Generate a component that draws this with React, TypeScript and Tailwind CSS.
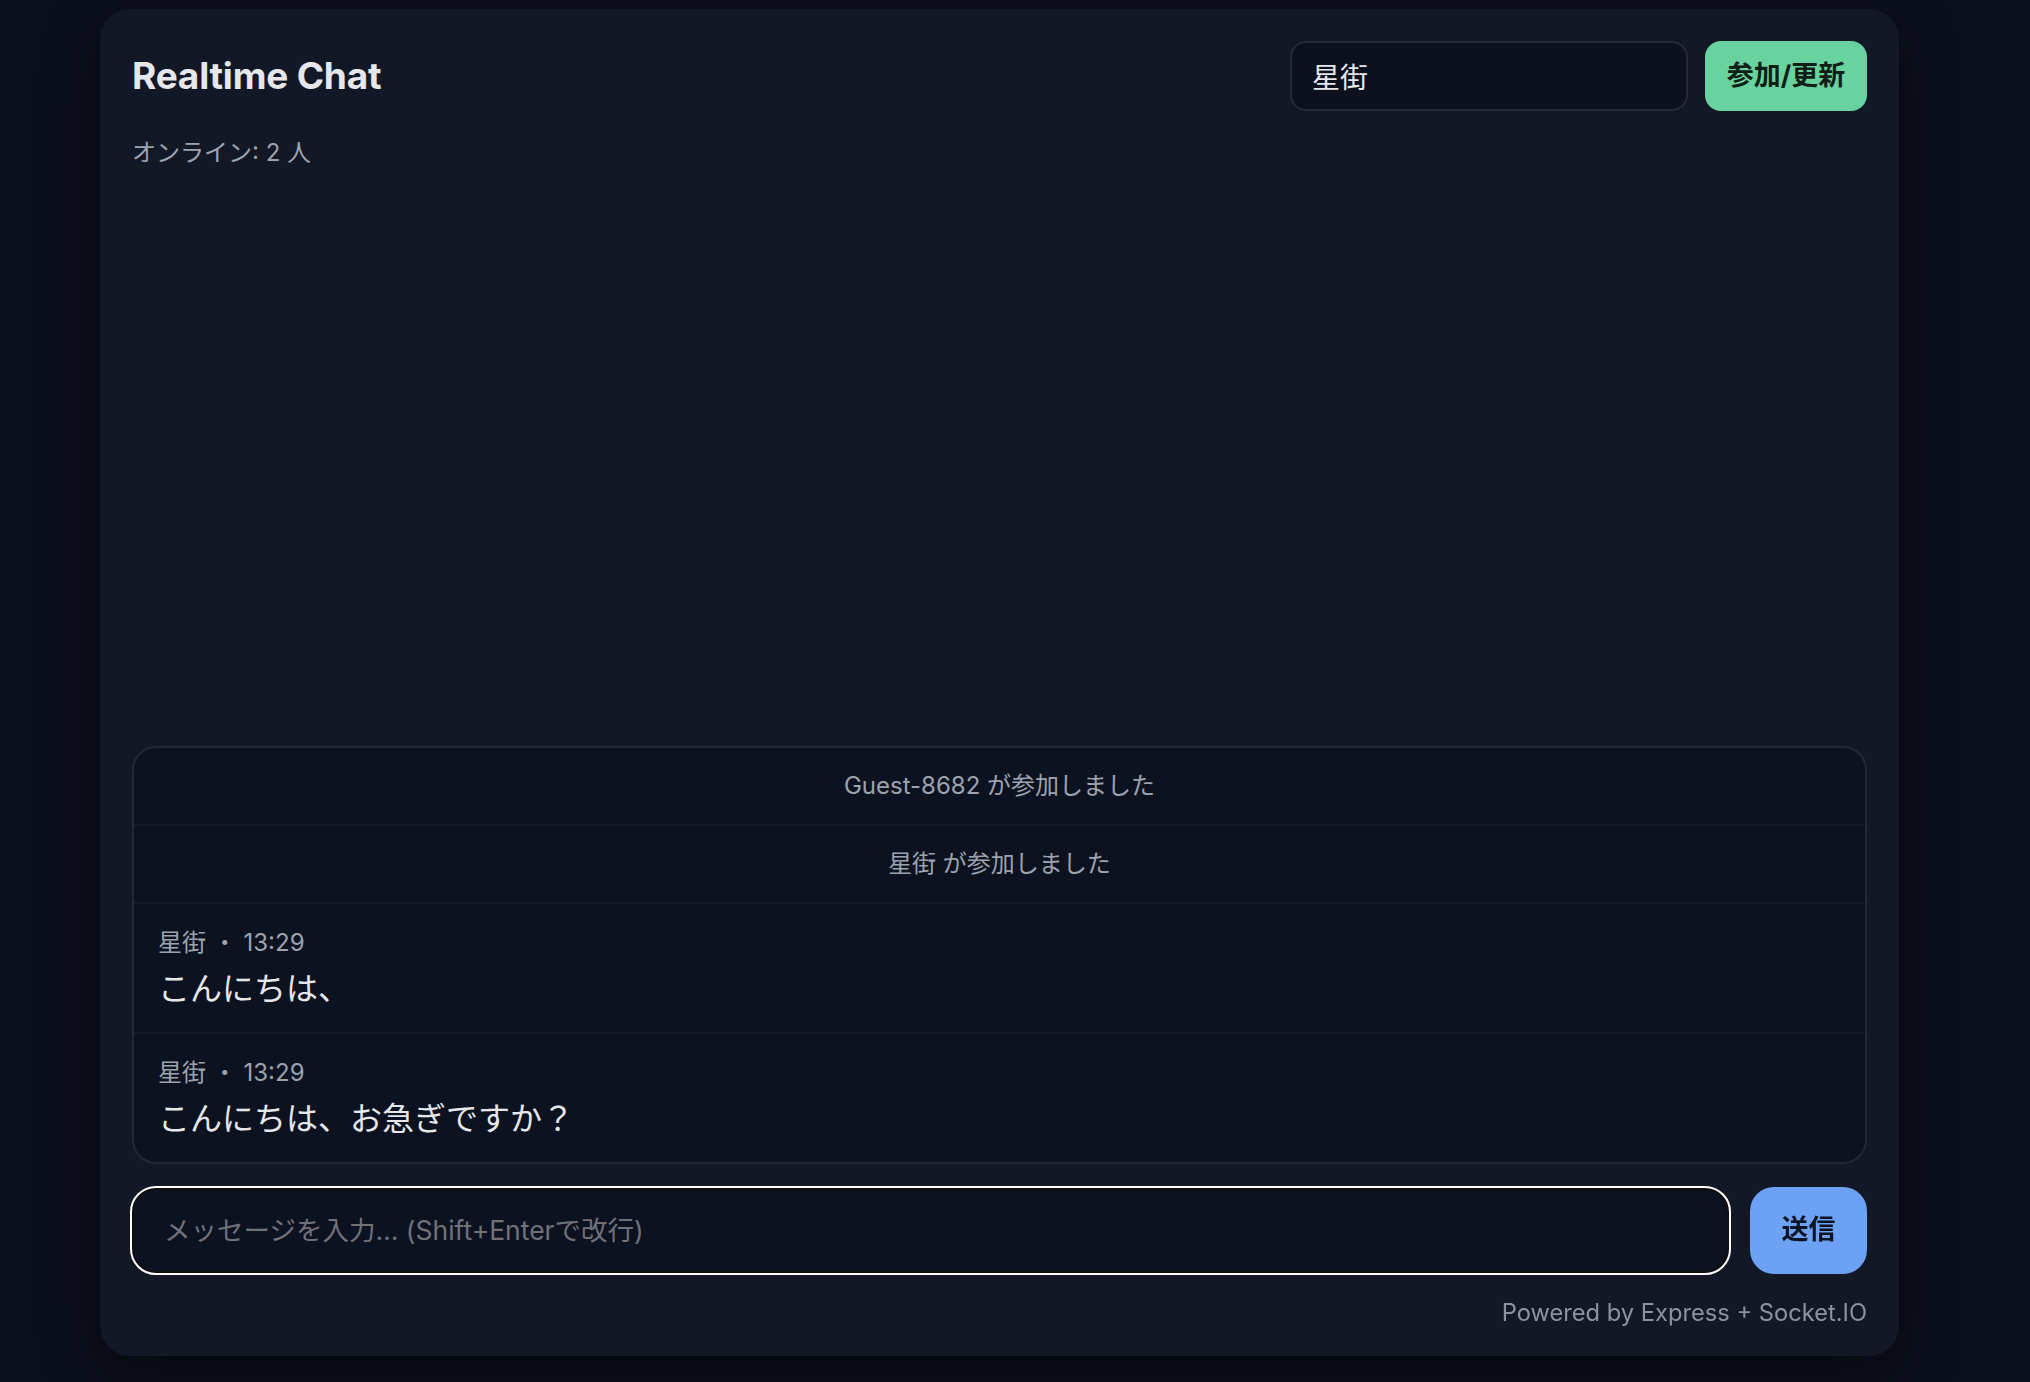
import { useState } from 'react'

type Entry =
  | { kind: 'system'; text: string }
  | { kind: 'message'; name: string; time: string; text: string }

const entries: Entry[] = [
  { kind: 'system', text: 'Guest-8682 が参加しました' },
  { kind: 'system', text: '星街 が参加しました' },
  { kind: 'message', name: '星街', time: '13:29', text: 'こんにちは、' },
  { kind: 'message', name: '星街', time: '13:29', text: 'こんにちは、お急ぎですか？' },
]

function MessageRow({ entry }: { entry: Entry }) {
  if (entry.kind === 'system') {
    return (
      <div className="py-[22px] text-center text-[24px] leading-[32px] text-[#9ca3af]">
        {entry.text}
      </div>
    )
  }
  return (
    <div className="px-[24px] pt-[23px] pb-[19px]">
      <div className="text-[24px] leading-[32px] text-[#9ca3af]">
        {entry.name} ・ {entry.time}
      </div>
      <div className="mt-[6px] text-[32px] leading-[48px] text-[#e5e7eb]">{entry.text}</div>
    </div>
  )
}

function App() {
  const [name, setName] = useState('星街')
  const [draft, setDraft] = useState('')

  return (
    <div
      className="min-h-screen w-full bg-[#0c101d] pt-[9px]"
      style={{ fontFamily: 'Inter, "Noto Sans CJK JP", sans-serif' }}
    >
      <div className="ml-[100px] flex h-[1347px] w-[1799px] flex-col rounded-[30px] bg-[#121826] px-[32px] pt-[32px] pb-[27px] shadow-[0_20px_60px_rgba(0,0,0,0.45)]">
        {/* Header */}
        <div className="flex h-[70px] items-center justify-between">
          <h1 className="text-[37px] font-bold tracking-[-0.2px] text-[#e5e7eb]">Realtime Chat</h1>
          <div className="flex gap-[17px]">
            <input
              value={name}
              onChange={(e) => setName(e.target.value)}
              className="h-[70px] w-[398px] rounded-[16px] border-2 border-[#252a36] bg-[#0c111d] px-[20px] text-[28px] text-[#e5e7eb] outline-none"
            />
            <button className="h-[70px] w-[162px] rounded-[16px] bg-[#69d39f] text-[27px] font-bold text-[#0f1f17]">
              参加/更新
            </button>
          </div>
        </div>
        <div className="mt-[26px] text-[24px] leading-[32px] text-[#9ca3af]">オンライン: 2 人</div>

        {/* Messages */}
        <div className="flex min-h-0 flex-1 flex-col justify-end">
          <div className="divide-y-2 divide-[#151b27] overflow-hidden rounded-[24px] border-2 border-[#222836] bg-[#0d1220]">
            {entries.map((entry, i) => (
              <MessageRow key={i} entry={entry} />
            ))}
          </div>
        </div>

        {/* Composer */}
        <div className="mt-[23px] flex items-center gap-[21px]">
          <textarea
            autoFocus
            value={draft}
            onChange={(e) => setDraft(e.target.value)}
            placeholder="メッセージを入力… (Shift+Enterで改行)"
            className="h-[85px] flex-1 resize-none rounded-[24px] border-2 border-[#0f0f10] bg-[#0d1220] px-[30px] py-[24px] text-[26.5px] leading-[32px] text-[#e5e7eb] outline-2 outline-white placeholder:text-[#71717a]"
          />
          <button className="h-[87px] w-[117px] rounded-[24px] bg-[#6ca1f4] text-[27px] font-bold text-[#0c1424]">
            送信
          </button>
        </div>
        <div className="mt-[23px] text-right text-[23.7px] leading-[32px] text-[#8b92a1]">
          Powered by Express + Socket.IO
        </div>
      </div>
    </div>
  )
}

export default App
